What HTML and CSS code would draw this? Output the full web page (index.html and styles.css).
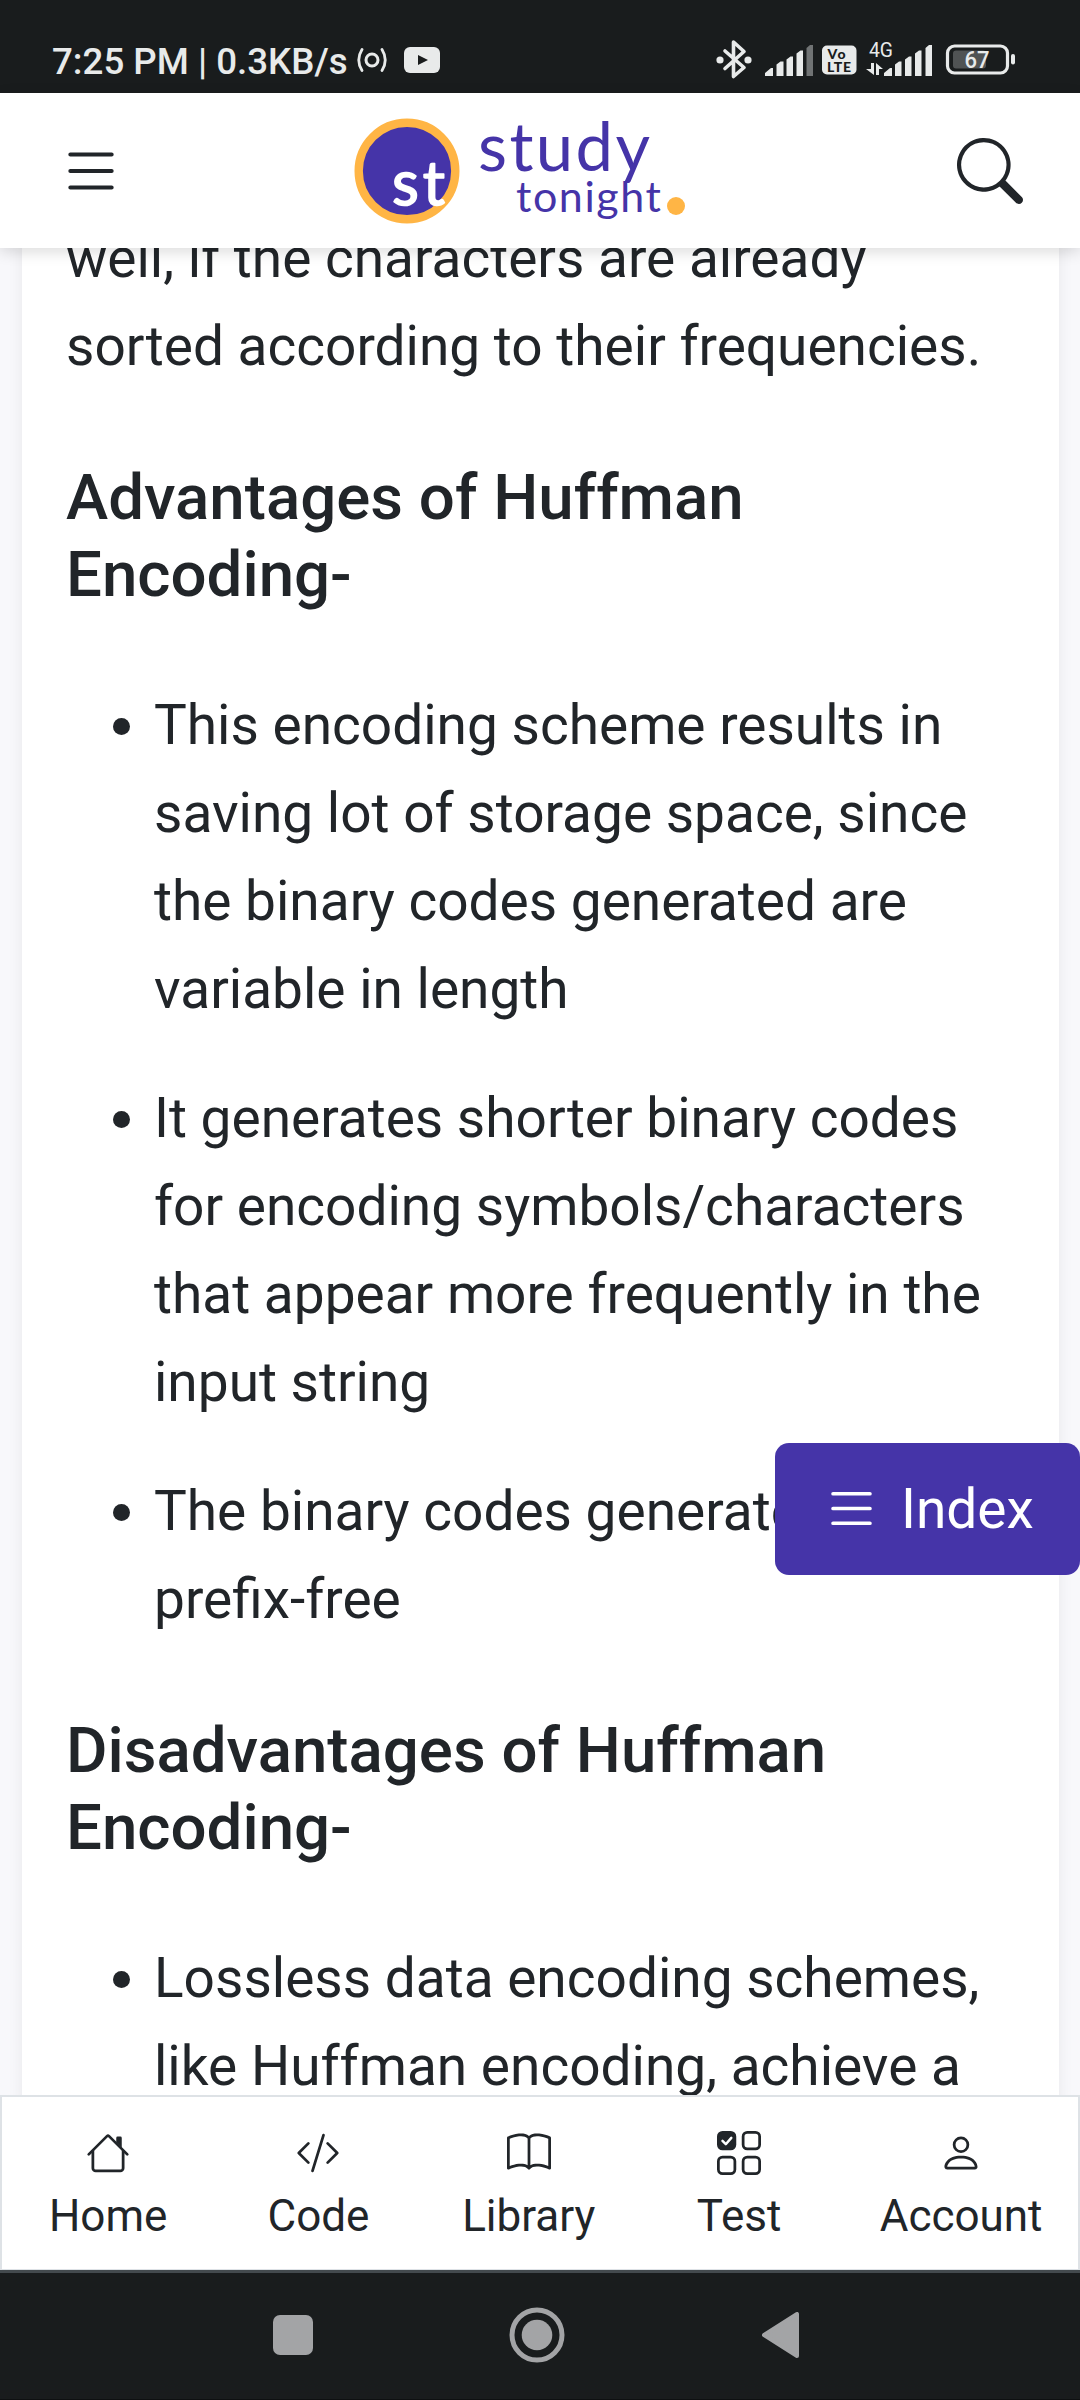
FILE: index.html
```html
<!DOCTYPE html>
<html lang="en">
<head>
<meta charset="utf-8">
<title>Huffman Encoding - Studytonight</title>
<link rel="stylesheet" href="styles.css">
</head>
<body>
<div class="status-bar">
  <div class="status-left">
    <span class="clock">7:25 PM | 0.3KB/s</span>
    <svg class="cast-icon" width="32" height="28" viewBox="0 0 32 28" fill="none" stroke="#e8eaea" stroke-linecap="round">
      <circle cx="16" cy="14" r="6" stroke-width="3"/>
      <path d="M6 3.5Q-.5 14 6 24.500M26 3.500Q32.500 14 26 24.500" stroke-width="2.800"/>
    </svg>
    <svg class="video-icon" width="36" height="26" viewBox="0 0 36 26"><rect width="36" height="26" rx="6" fill="#e8eaea"/><path d="M14 8l10 5-10 5z" fill="#191c1d"/></svg>
  </div>
  <svg class="status-right" width="302" height="42" viewBox="0 0 302 42" fill="#e8eaea">
    <path d="M9 12l19 16.500-10.500 9V3L28 12.500 9 29.500" fill="none" stroke="#e8eaea" stroke-width="3.600" stroke-linejoin="round" stroke-linecap="round"/>
    <circle cx="4" cy="21" r="3.600"/><circle cx="32" cy="21" r="3.600"/>
    <path d="M49 37v-3l6-5h2v8zM60.500 37V25.500l4-3h3V37zM70.500 37V20.500l4-3h2.500V37zM80.500 37V14.500l4-3H87V37z"/>
    <path d="M90.500 37V9l3.500-3h3v31z" fill="#707374"/>
    <rect x="106" y="6.500" width="34.500" height="29" rx="5"/>
    <g fill="#191c1d" font-family="Lato" font-weight="900" font-size="14">
      <text x="111.500" y="20" textLength="18">Vo</text><text x="111" y="32.500" textLength="24">LTE</text>
    </g>
    <text x="153" y="17.500" font-family="Roboto" font-size="21" textLength="24" lengthAdjust="spacingAndGlyphs">4G</text>
    <path d="M155 24h3v12l-8-6h5zM160 36h3v-6h4l-7-6z"/>
    <path d="M168 37v-3l6-5h2v8zM179 37V25.500l4-3h2.500V37zM189 37V20.500l4-3h2.500V37zM199 37V14.500l4-3h2.500V37zM209.500 37V9l3.500-3h3v31z"/>
    <rect x="231.500" y="7" width="60" height="27" rx="7" fill="none" stroke="#e8eaea" stroke-width="3.200"/>
    <rect x="237" y="11.500" width="33" height="18" rx="3" fill="#505354"/>
    <rect x="295" y="15" width="4" height="10.500" rx="2"/>
    <text x="248.500" y="29" font-family="Roboto" font-weight="500" font-size="24" textLength="25" lengthAdjust="spacingAndGlyphs">67</text>
  </svg>
</div>

<header class="site-header">
  <svg class="icon-lg" viewBox="0 0 16 16" fill="currentColor"><path d="M2.500 12a.5.5 0 0 1 .5-.5h10a.5.5 0 0 1 0 1H3a.5.5 0 0 1-.5-.5m0-4a.5.5 0 0 1 .5-.5h10a.5.5 0 0 1 0 1H3a.5.5 0 0 1-.5-.5m0-4a.5.5 0 0 1 .5-.5h10a.5.5 0 0 1 0 1H3a.5.5 0 0 1-.5-.5"/></svg>
  <svg class="logo" width="336" height="112" viewBox="0 0 336 112">
    <circle cx="55" cy="56" r="48.300" fill="#4534a8" stroke="#ffb545" stroke-width="8.400"/>
    <g font-family="Lato" stroke-linejoin="round">
      <text x="40" y="89.500" font-size="62" textLength="53" fill="#fff" stroke="#fff" stroke-width="1.600">st</text>
      <text x="126" y="55.500" font-size="67" textLength="172" fill="#4534a8">study</text>
      <text x="164" y="97" font-size="43" textLength="145" fill="#4534a8">tonight</text>
    </g>
    <circle cx="324" cy="91" r="9" fill="#ffb545"/>
  </svg>
  <svg class="icon-lg" viewBox="0 0 16 16" fill="currentColor"><path d="M11.742 10.344a6.500 6.500 0 1 0-1.397 1.398h-.001c.03.04.062.078.098.115l3.850 3.850a1 1 0 0 0 1.415-1.414l-3.850-3.850a1.007 1.007 0 0 0-.115-.1zM12 6.500a5.500 5.500 0 1 1-11 0 5.500 5.500 0 0 1 11 0z"/></svg>
</header>

<main class="page">
  <article class="card">
    <p>well, if the characters are already<br>sorted according to their frequencies.</p>
    <h2>Advantages of Huffman<br>Encoding-</h2>
    <ul>
      <li>This encoding scheme results in<br>saving lot of storage space, since<br>the binary codes generated are<br>variable in length</li>
      <li>It generates shorter binary codes<br>for encoding symbols/characters<br>that appear more frequently in the<br>input string</li>
      <li>The binary codes generated are<br>prefix-free</li>
    </ul>
    <h2>Disadvantages of Huffman<br>Encoding-</h2>
    <ul>
      <li>Lossless data encoding schemes,<br>like Huffman encoding, achieve a</li>
    </ul>
  </article>
</main>

<nav class="tab-bar">
  <a class="tab"><svg class="icon" viewBox="0 0 16 16" fill="currentColor"><path d="M2 13.500V7h1v6.500a.5.5 0 0 0 .5.5h9a.5.5 0 0 0 .5-.5V7h1v6.500a1.500 1.500 0 0 1-1.500 1.500h-9A1.500 1.500 0 0 1 2 13.500zm11-11V6l-2-2V2.500a.5.5 0 0 1 .5-.5h1a.5.5 0 0 1 .5.5z"/><path d="M7.293 1.500a1 1 0 0 1 1.414 0l6.647 6.646a.5.5 0 0 1-.708.708L8 2.207 1.354 8.854a.5.5 0 1 1-.708-.708L7.293 1.500z"/></svg>Home</a>
  <a class="tab"><svg class="icon" viewBox="0 0 16 16" fill="currentColor"><path d="M10.478 1.647a.5.5 0 1 0-.956-.294l-4 13a.5.5 0 0 0 .956.294l4-13zM4.854 4.146a.5.5 0 0 1 0 .708L1.707 8l3.147 3.146a.5.5 0 0 1-.708.708l-3.500-3.500a.5.5 0 0 1 0-.708l3.500-3.500a.5.5 0 0 1 .708 0zm6.292 0a.5.5 0 0 0 0 .708L14.293 8l-3.147 3.146a.5.5 0 0 0 .708.708l3.500-3.500a.5.5 0 0 0 0-.708l-3.500-3.500a.5.5 0 0 0-.708 0z"/></svg>Code</a>
  <a class="tab"><svg class="icon" viewBox="0 0 16 16" fill="currentColor"><path d="M1 2.828c.885-.37 2.154-.769 3.388-.893 1.330-.134 2.458.063 3.112.752v9.746c-.935-.53-2.120-.603-3.213-.493-1.180.12-2.370.461-3.287.811V2.828zm7.500-.141c.654-.689 1.782-.886 3.112-.752 1.234.124 2.503.523 3.388.893v9.923c-.918-.35-2.107-.692-3.287-.81-1.094-.111-2.278-.039-3.213.492V2.687zM8 1.783C7.015.936 5.587.81 4.287.94c-1.514.153-3.042.672-3.994 1.105A.5.5 0 0 0 0 2.500v11a.5.5 0 0 0 .707.455c.882-.4 2.303-.881 3.680-1.020 1.409-.142 2.590.087 3.223.877a.5.5 0 0 0 .78 0c.633-.79 1.814-1.019 3.222-.877 1.378.139 2.800.620 3.681 1.020A.5.5 0 0 0 16 13.500v-11a.5.5 0 0 0-.293-.455c-.952-.433-2.480-.952-3.994-1.105C10.413.809 8.985.936 8 1.783z"/></svg>Library</a>
  <a class="tab"><svg class="icon" viewBox="0 0 16 16" fill="currentColor"><g fill="none" stroke="currentColor"><rect x="9.500" y=".5" width="6" height="6" rx="1.500"/><rect x=".5" y="9.500" width="6" height="6" rx="1.500"/><rect x="9.500" y="9.500" width="6" height="6" rx="1.500"/></g><rect width="7" height="7" rx="2"/><path d="M2 3.600l1.200 1.200L5.200 2.500" fill="none" stroke="#fff" stroke-width=".9" stroke-linecap="round" stroke-linejoin="round"/></svg>Test</a>
  <a class="tab"><svg class="icon" viewBox="0 0 16 16" fill="currentColor"><path d="M8 8a3 3 0 1 0 0-6 3 3 0 0 0 0 6zm2-3a2 2 0 1 1-4 0 2 2 0 0 1 4 0zm4 8c0 1-1 1-1 1H3s-1 0-1-1 1-4 6-4 6 3 6 4zm-1-.004c-.001-.246-.154-.986-.832-1.664C11.516 10.680 10.289 10 8 10c-2.290 0-3.516.680-4.168 1.332-.678.678-.830 1.418-.832 1.664h10z"/></svg>Account</a>
</nav>

<div class="system-nav">
  <svg width="40" height="40" viewBox="0 0 40 40"><rect width="40" height="40" rx="7" fill="#a3a4a6"/></svg>
  <svg width="56" height="56" viewBox="0 0 56 56"><circle cx="28" cy="28" r="25" fill="none" stroke="#a3a4a6" stroke-width="5"/><circle cx="28" cy="28" r="15.300" fill="#a3a4a6"/></svg>
  <svg width="37" height="46" viewBox="0 0 37 46"><path d="M2 23L35 2v42z" fill="#a3a4a6" stroke="#a3a4a6" stroke-width="4" stroke-linejoin="round"/></svg>
</div>

<button class="index-button"><svg class="index-icon" viewBox="0 0 16 16" fill="currentColor"><path d="M2.500 12a.5.5 0 0 1 .5-.5h10a.5.5 0 0 1 0 1H3a.5.5 0 0 1-.5-.5m0-4a.5.5 0 0 1 .5-.5h10a.5.5 0 0 1 0 1H3a.5.5 0 0 1-.5-.5m0-4a.5.5 0 0 1 .5-.5h10a.5.5 0 0 1 0 1H3a.5.5 0 0 1-.5-.5"/></svg>Index</button>
</body>
</html>
```
FILE: styles.css
```css
* { box-sizing: border-box; }
svg { display: block; flex: none; }

body {
  margin: 0;
  position: relative;
  display: flex;
  flex-direction: column;
  width: 1080px;
  height: 2400px;
  overflow: hidden;
  background: #f8f8fb;
  color: #212529;
  font-family: Roboto, sans-serif;
}

.status-bar {
  height: 93px;
  display: flex;
  align-items: flex-start;
  justify-content: space-between;
  padding: 39px 62px 0 52px;
  background: #191c1d;
  color: #e8eaea;
}
.status-left { display: flex; align-items: center; height: 42px; }
.clock { font-size: 36.700px; font-weight: 500; line-height: 42px; padding-top: 4px; white-space: nowrap; }
.cast-icon { margin-left: 8px; }
.video-icon { margin-left: 16px; }

.site-header {
  position: relative;
  z-index: 2;
  height: 155px;
  display: flex;
  align-items: center;
  padding: 0 57px 0 58px;
  background: #fff;
  box-shadow: 0 4px 14px rgba(0, 0, 0, .14);
}
.icon-lg { width: 66px; height: 66px; }
.logo { margin: 0 auto 0 228px; }

.page {
  flex: 1;
  min-height: 0;
  overflow: hidden;
  padding: 0 21px 0 22px;
}
.card {
  margin-top: -34px;
  height: 1900px;
  padding: 0 44px;
  background: #fff;
  box-shadow: 0 0 14px rgba(0, 0, 0, .07);
  font-size: 55px;
  line-height: 88px;
  white-space: nowrap;
}
.card p { margin: 0 0 69px; }
.card h2 { margin: 0 0 68px; font-size: 63.600px; font-weight: 500; line-height: 77px; }
.card ul { margin: 0 0 69px; padding-left: 88px; }
.card li + li { margin-top: 41px; }

.tab-bar {
  height: 175px;
  display: grid;
  grid-template-columns: 210.500fr 210.500fr 210.500fr 210.500fr 234fr;
  padding-left: 1px;
  background: #fff;
  border: 2px solid #dee2e6;
  border-bottom-width: 1px;
}
.tab {
  display: flex;
  flex-direction: column;
  align-items: center;
  gap: 15px;
  padding-top: 34px;
  font-size: 44px;
  line-height: 52px;
}
.icon { width: 44px; height: 44px; }

.system-nav {
  height: 130px;
  display: grid;
  grid-template-columns: 244px 244px 244px;
  justify-content: center;
  align-items: center;
  justify-items: center;
  padding: 0 7px 2px 0;
  background: #191c1d;
  border-top: 3px solid #434a4e;
  border-bottom: 1px solid #0e1011;
}

.index-button {
  position: absolute;
  z-index: 3;
  right: 0;
  top: 1443px;
  width: 305px;
  height: 132px;
  display: flex;
  align-items: center;
  gap: 20px;
  padding: 0 0 1px 47px;
  border: 0;
  border-radius: 14px;
  background: #4534a8;
  color: #fff;
  font: 400 55px/64px Roboto, sans-serif;
}
.index-icon { width: 59px; height: 59px; }
```
